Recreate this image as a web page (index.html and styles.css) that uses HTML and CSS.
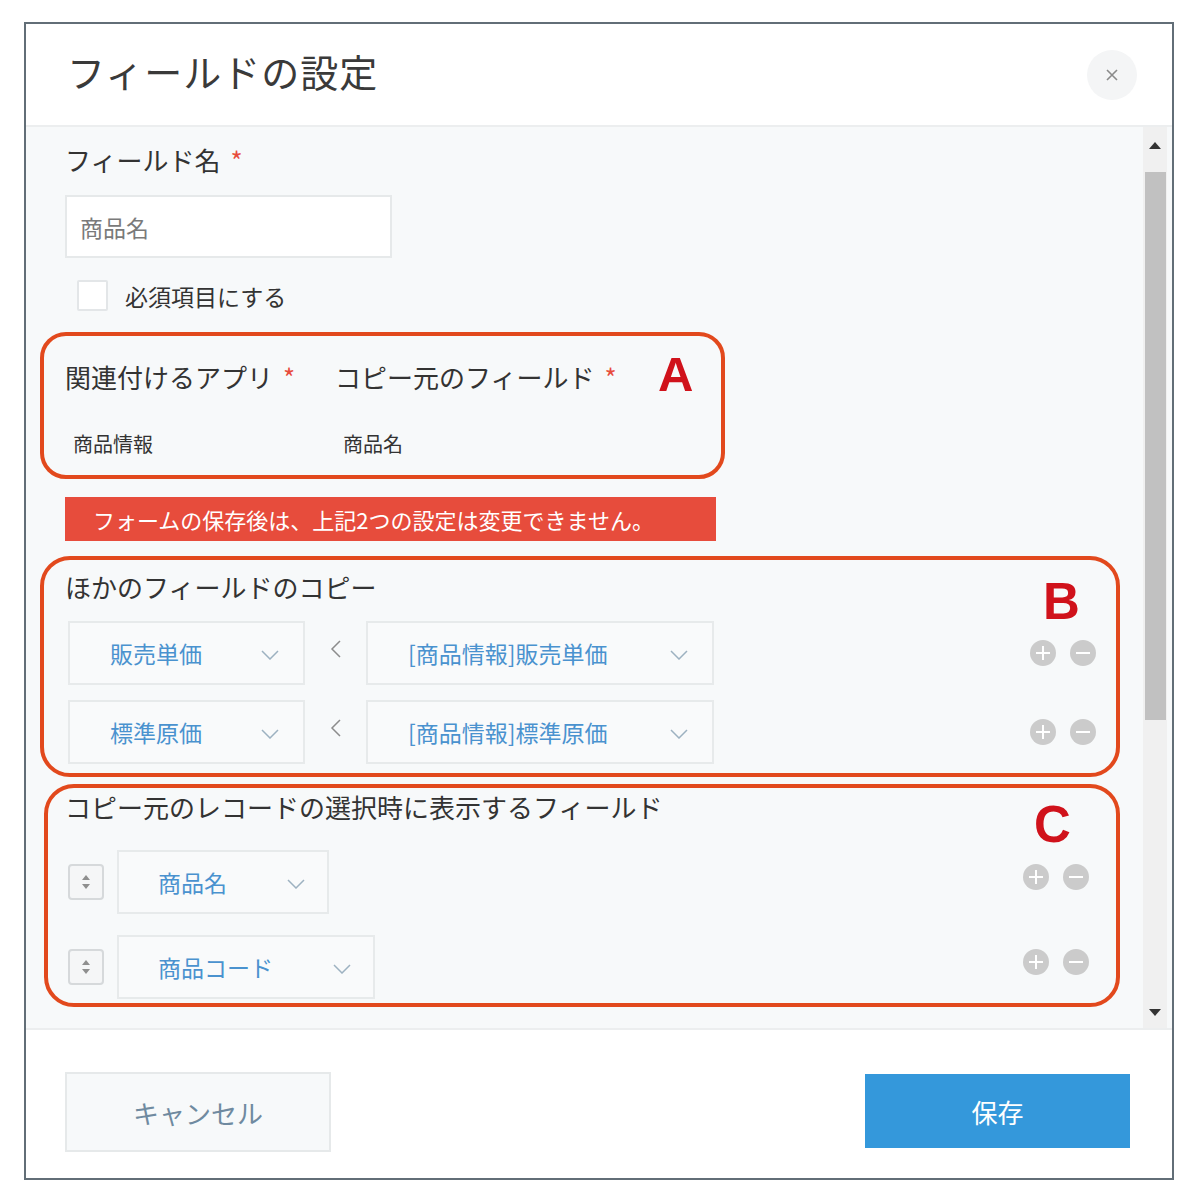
FILE: index.html
```html
<!DOCTYPE html>
<html lang="ja">
<head>
<meta charset="utf-8">
<title>フィールドの設定</title>
<link rel="stylesheet" href="styles.css">
</head>
<body>
<div class="dialog">
  <div class="header">
    <h1 class="title">フィールドの設定</h1>
    <div class="close">
      <svg width="16" height="16" viewBox="0 0 16 16"><path d="M3 3 L13 13 M13 3 L3 13" stroke="#8a8a8a" stroke-width="1.6" fill="none"/></svg>
    </div>
  </div>
  <div class="body">
    <div class="content">
      <div class="field-label">フィールド名<span class="req">*</span></div>
      <div class="text-input">商品名</div>
      <div class="check-row"><span class="checkbox"></span><span>必須項目にする</span></div>

      <div class="box box-a">
        <span class="mark mark-a">A</span>
        <div class="a-cols">
          <div class="a-col a-col1">
            <div class="sub-label">関連付けるアプリ<span class="req">*</span></div>
            <div class="a-value">商品情報</div>
          </div>
          <div class="a-col">
            <div class="sub-label">コピー元のフィールド<span class="req">*</span></div>
            <div class="a-value">商品名</div>
          </div>
        </div>
      </div>

      <div class="error-bar">フォームの保存後は、上記2つの設定は変更できません。</div>

      <div class="box box-b">
        <span class="mark mark-b">B</span>
        <div class="sub-label">ほかのフィールドのコピー</div>
        <div class="copy-row">
          <div class="select sel-b1"><span class="sel-text">販売単価</span><svg class="chev" width="18" height="10" viewBox="0 0 18 10"><polyline points="1,1 9,9 17,1" fill="none" stroke="#9db1c1" stroke-width="1.5"/></svg></div>
          <div class="lt"><svg width="12" height="20" viewBox="0 0 12 20"><polyline points="10,2 2,10 10,18" fill="none" stroke="#8c8c8c" stroke-width="1.5"/></svg></div>
          <div class="select sel-b2"><span class="sel-text">[商品情報]販売単価</span><svg class="chev" width="18" height="10" viewBox="0 0 18 10"><polyline points="1,1 9,9 17,1" fill="none" stroke="#9db1c1" stroke-width="1.5"/></svg></div>
          <div class="actions">
            <svg width="26" height="26" viewBox="0 0 26 26"><circle cx="13" cy="13" r="13" fill="#cbcbcb"/><path d="M13 6 V20 M6 13 H20" stroke="#fff" stroke-width="2"/></svg>
            <svg width="26" height="26" viewBox="0 0 26 26"><circle cx="13" cy="13" r="13" fill="#cbcbcb"/><path d="M6 13 H20" stroke="#fff" stroke-width="2"/></svg>
          </div>
        </div>
        <div class="copy-row row2">
          <div class="select sel-b1"><span class="sel-text">標準原価</span><svg class="chev" width="18" height="10" viewBox="0 0 18 10"><polyline points="1,1 9,9 17,1" fill="none" stroke="#9db1c1" stroke-width="1.5"/></svg></div>
          <div class="lt"><svg width="12" height="20" viewBox="0 0 12 20"><polyline points="10,2 2,10 10,18" fill="none" stroke="#8c8c8c" stroke-width="1.5"/></svg></div>
          <div class="select sel-b2"><span class="sel-text">[商品情報]標準原価</span><svg class="chev" width="18" height="10" viewBox="0 0 18 10"><polyline points="1,1 9,9 17,1" fill="none" stroke="#9db1c1" stroke-width="1.5"/></svg></div>
          <div class="actions">
            <svg width="26" height="26" viewBox="0 0 26 26"><circle cx="13" cy="13" r="13" fill="#cbcbcb"/><path d="M13 6 V20 M6 13 H20" stroke="#fff" stroke-width="2"/></svg>
            <svg width="26" height="26" viewBox="0 0 26 26"><circle cx="13" cy="13" r="13" fill="#cbcbcb"/><path d="M6 13 H20" stroke="#fff" stroke-width="2"/></svg>
          </div>
        </div>
      </div>

      <div class="box box-c">
        <span class="mark mark-c">C</span>
        <div class="sub-label">コピー元のレコードの選択時に表示するフィールド</div>
        <div class="show-row">
          <div class="handle"><svg width="12" height="20" viewBox="0 0 12 20"><path d="M6 3 L10 8 H2 Z M6 17 L10 12 H2 Z" fill="#8f8f8f"/></svg></div>
          <div class="select sel-c1"><span class="sel-text">商品名</span><svg class="chev" width="18" height="10" viewBox="0 0 18 10"><polyline points="1,1 9,9 17,1" fill="none" stroke="#9db1c1" stroke-width="1.5"/></svg></div>
          <div class="actions c-actions">
            <svg width="26" height="26" viewBox="0 0 26 26"><circle cx="13" cy="13" r="13" fill="#cbcbcb"/><path d="M13 6 V20 M6 13 H20" stroke="#fff" stroke-width="2"/></svg>
            <svg width="26" height="26" viewBox="0 0 26 26"><circle cx="13" cy="13" r="13" fill="#cbcbcb"/><path d="M6 13 H20" stroke="#fff" stroke-width="2"/></svg>
          </div>
        </div>
        <div class="show-row row2c">
          <div class="handle"><svg width="12" height="20" viewBox="0 0 12 20"><path d="M6 3 L10 8 H2 Z M6 17 L10 12 H2 Z" fill="#8f8f8f"/></svg></div>
          <div class="select sel-c2"><span class="sel-text">商品コード</span><svg class="chev" width="18" height="10" viewBox="0 0 18 10"><polyline points="1,1 9,9 17,1" fill="none" stroke="#9db1c1" stroke-width="1.5"/></svg></div>
          <div class="actions c-actions">
            <svg width="26" height="26" viewBox="0 0 26 26"><circle cx="13" cy="13" r="13" fill="#cbcbcb"/><path d="M13 6 V20 M6 13 H20" stroke="#fff" stroke-width="2"/></svg>
            <svg width="26" height="26" viewBox="0 0 26 26"><circle cx="13" cy="13" r="13" fill="#cbcbcb"/><path d="M6 13 H20" stroke="#fff" stroke-width="2"/></svg>
          </div>
        </div>
      </div>
    </div>
    <div class="scrollbar">
      <div class="sb-btn sb-up"><svg width="12" height="7" viewBox="0 0 12 7"><path d="M6 0 L12 7 H0 Z" fill="#333"/></svg></div>
      <div class="sb-track"><div class="sb-thumb"></div></div>
      <div class="sb-btn sb-down"><svg width="12" height="7" viewBox="0 0 12 7"><path d="M0 0 H12 L6 7 Z" fill="#333"/></svg></div>
    </div>
  </div>
  <div class="footer">
    <button class="btn btn-cancel" type="button">キャンセル</button>
    <button class="btn btn-save" type="button">保存</button>
  </div>
</div>
</body>
</html>
```

FILE: styles.css
```css
body {
  margin: 0;
  background: #ffffff;
  font-family: "Noto Sans CJK JP", "Noto Sans", sans-serif;
  color: #333333;
}

.dialog {
  margin: 22px 0 0 24px;
  width: 1150px;
  height: 1158px;
  box-sizing: border-box;
  border: 2px solid #626e77;
  background: #ffffff;
  display: flex;
  flex-direction: column;
}

/* header */
.header {
  flex: none;
  height: 103px;
  box-sizing: border-box;
  border-bottom: 2px solid #eceeef;
  display: flex;
  align-items: center;
  justify-content: space-between;
  padding: 0 35px 0 41px;
}
.title {
  margin: 0 0 8px 0;
  font-size: 38px;
  line-height: 46px;
  font-weight: 400;
  letter-spacing: 1px;
  color: #3a3a3a;
}
.close {
  width: 50px;
  height: 50px;
  border-radius: 50%;
  background: #f4f5f6;
  display: flex;
  align-items: center;
  justify-content: center;
}

/* body */
.body {
  flex: 1;
  min-height: 0;
  display: flex;
  background: #f7f9fa;
  overflow: hidden;
}
.content {
  flex: 1;
  min-width: 0;
  padding: 18px 0 0 14px;
  overflow: hidden;
}

.field-label {
  margin-left: 25px;
  font-size: 26px;
  line-height: 30px;
  color: #333;
}
.req {
  color: #e74c3c;
  margin-left: 10px;
  font-size: 26px;
}

.text-input {
  margin: 20px 0 0 25px;
  width: 327px;
  height: 63px;
  box-sizing: border-box;
  border: 2px solid #e6e9ea;
  background: #ffffff;
  padding-left: 13px;
  display: flex;
  align-items: center;
  font-size: 23px;
  color: #7a7a7a;
}

.check-row {
  margin: 22px 0 0 37px;
  height: 31px;
  display: flex;
  align-items: center;
  gap: 17px;
  font-size: 23px;
  color: #333;
}
.checkbox {
  width: 31px;
  height: 31px;
  box-sizing: border-box;
  border: 2px solid #e3e6e8;
  border-radius: 2px;
  background: #ffffff;
}

/* annotation boxes */
.box {
  position: relative;
  box-sizing: border-box;
  border: 4px solid #e2491d;
}
.mark {
  position: absolute;
  font-family: "Liberation Sans", Arial, sans-serif;
  font-weight: 700;
  font-size: 49px;
  line-height: 49px;
  color: #d0121b;
}
.mark-a { left: 614px; top: 14px; }
.mark-b { left: 999px; top: 17px; font-size: 51px; }
.mark-c { left: 986px; top: 12px; font-size: 51px; }

.box-a {
  margin-top: 21px;
  width: 685px;
  height: 147px;
  border-radius: 26px;
  padding: 26px 0 0 21px;
}
.a-cols { display: flex; }
.a-col { white-space: nowrap; }
.a-col1 { width: 270px; }
.sub-label {
  font-size: 26px;
  line-height: 30px;
  color: #333;
  white-space: nowrap;
}
.a-value {
  margin-top: 40px;
  padding-left: 8px;
  font-size: 20px;
  line-height: 24px;
  color: #333;
}

.error-bar {
  margin: 18px 0 0 25px;
  width: 651px;
  height: 44px;
  box-sizing: border-box;
  background: #e74c3c;
  color: #ffffff;
  font-size: 22px;
  line-height: 44px;
  padding-left: 28px;
}

.box-b {
  margin-top: 15px;
  width: 1080px;
  height: 221px;
  border-radius: 30px;
  padding: 12px 20px 0 21px;
}
.copy-row {
  margin-top: 19px;
  display: flex;
  align-items: center;
  height: 64px;
}
.copy-row.row2 { margin-top: 15px; }

.select {
  height: 64px;
  box-sizing: border-box;
  border: 2px solid #e7eaeb;
  background: #f9fafb;
  display: flex;
  align-items: center;
  padding-left: 40px;
  padding-right: 24px;
}
.sel-text {
  flex: 1;
  font-size: 23px;
  color: #4a92cf;
  white-space: nowrap;
}
.chev { flex: none; margin-top: 4px; }
.sel-b1 { margin-left: 3px; width: 237px; }
.sel-b2 { width: 348px; }
.lt {
  width: 61px;
  display: flex;
  justify-content: center;
  margin-top: -8px;
}
.actions {
  margin-left: auto;
  display: flex;
  gap: 14px;
}

.box-c {
  margin: 7px 0 0 4px;
  width: 1076px;
  height: 223px;
  border-radius: 30px;
  padding: 4px 27px 0 17px;
}
.show-row {
  margin-top: 28px;
  display: flex;
  align-items: center;
  height: 64px;
}
.show-row.row2c { margin-top: 21px; }
.handle {
  margin-left: 3px;
  margin-right: 13px;
  width: 36px;
  height: 36px;
  box-sizing: border-box;
  border: 2px solid #d6d9db;
  border-radius: 4px;
  background: #f5f6f7;
  display: flex;
  align-items: center;
  justify-content: center;
}
.sel-c1 { width: 212px; padding-left: 39px; padding-right: 22px; }
.sel-c2 { width: 258px; padding-left: 39px; padding-right: 22px; }
.c-actions { margin-bottom: 10px; }

/* scrollbar */
.scrollbar {
  flex: none;
  width: 24px;
  margin-right: 5px;
  background: #f0f0f0;
  display: flex;
  flex-direction: column;
}
.sb-btn {
  display: flex;
  align-items: center;
  justify-content: center;
  flex: none;
}
.sb-up { height: 36px; }
.sb-down { height: 32px; }
.sb-track {
  flex: 1;
  padding-top: 9px;
  display: flex;
  justify-content: center;
}
.sb-thumb {
  width: 21px;
  height: 548px;
  background: #c1c1c1;
}

/* footer */
.footer {
  flex: none;
  height: 150px;
  box-sizing: border-box;
  border-top: 2px solid #eceeef;
  display: flex;
  justify-content: space-between;
  align-items: flex-start;
  padding: 42px 42px 0 39px;
}
.btn {
  font-family: "Noto Sans CJK JP", "Noto Sans", sans-serif;
  font-size: 26px;
  cursor: pointer;
}
.btn-cancel {
  width: 266px;
  height: 80px;
  border: 2px solid #e6e9ea;
  background: #f7f9fa;
  color: #6f8aa0;
}
.btn-save {
  margin-top: 2px;
  width: 265px;
  height: 74px;
  border: none;
  background: #3498db;
  color: #ffffff;
}
```
